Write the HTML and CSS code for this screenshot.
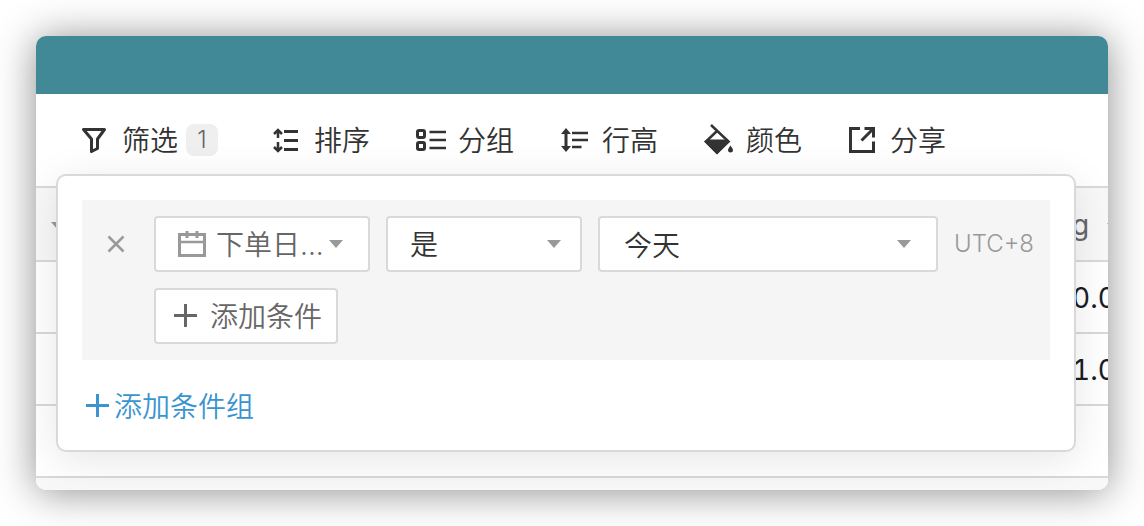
FILE: index.html
```html
<!DOCTYPE html>
<html lang="zh-CN">
<head>
  <meta charset="UTF-8" />
  <meta name="viewport" content="width=device-width, initial-scale=1.0" />
  <title>订单</title>
  <link rel="stylesheet" href="styles.css">
</head>
<body>
  <div class="window">
    <header class="title-bar"></header>

    <nav class="toolbar">
      <button class="tool" type="button">
        <svg class="icon" viewBox="0 0 32 32" fill="none" stroke="currentColor" stroke-width="3" stroke-linejoin="round">
          <path d="M3.500 5.500H24.500L17.500 15V24.500L11.500 27.500V15Z"/>
        </svg>
        <span class="label">筛选</span>
        <span class="badge">1</span>
      </button>
      <button class="tool" type="button">
        <svg class="icon" viewBox="0 0 32 32" fill="none" stroke="currentColor">
          <path stroke-width="2.500" d="M6 14V6M2 10L6 6L10 10M6 18V26M2 23L6 27L10 23"/>
          <path stroke-width="3" d="M12 7.500H26M12 16.500H26M12 25.500H26"/>
        </svg>
        <span class="label">排序</span>
      </button>
      <button class="tool" type="button">
        <svg class="icon" viewBox="0 0 32 32" fill="none" stroke="currentColor">
          <rect stroke-width="3" x="1.500" y="6.500" width="7" height="7" rx="1.500"/>
          <rect stroke-width="3" x="1.500" y="18.500" width="7" height="7" rx="1.500"/>
          <path stroke-width="2.500" d="M13.500 8H30M13.500 16H30M13.500 24H30"/>
        </svg>
        <span class="label">分组</span>
      </button>
      <button class="tool" type="button">
        <svg class="icon" viewBox="0 0 32 32" fill="currentColor">
          <path d="M6 4L11 10H7.500V22H11L6 28L1 22H4.500V10H1Z"/>
          <path d="M12 7.800H28V10.300H12ZM12 14.800H28V17.300H12ZM12 21.800H21.500V24.300H12Z"/>
        </svg>
        <span class="label">行高</span>
      </button>
      <button class="tool" type="button">
        <svg class="icon" viewBox="0 0 32 32">
          <path fill="none" stroke="currentColor" stroke-width="2.500" d="M7 1L24.500 17.500L13 28.500L2 17.500L13 7"/>
          <path fill="currentColor" d="M3 15.500H23.500L26 17.500L13 30.500L0 17.500Z"/>
          <path fill="currentColor" d="M26.500 21.500C28 24 29 25 29 26.200A2.500 2.200 0 0 1 24 26.200C24 25 25 24 26.500 21.500Z"/>
        </svg>
        <span class="label">颜色</span>
      </button>
      <button class="tool" type="button">
        <svg class="icon" viewBox="0 0 32 32" fill="none" stroke="currentColor" stroke-width="3">
          <path d="M12 4.500H2.500V27.500H25.500V17.500"/>
          <path d="M13.500 16.500L25 5M16.500 4.500H25.500V13.500"/>
        </svg>
        <span class="label">分享</span>
      </button>
    </nav>

    <table class="grid">
      <thead>
        <tr>
          <th class="first"><span class="caret"></span></th>
          <th></th>
          <th class="last">g<span class="caret"></span></th>
        </tr>
      </thead>
      <tbody>
        <tr><td></td><td></td><td class="last">0.0</td></tr>
        <tr><td></td><td></td><td class="last">1.0</td></tr>
        <tr><td></td><td></td><td></td></tr>
      </tbody>
    </table>
    <footer class="grid-footer"></footer>

    <section class="popover">
      <div class="group">
        <div class="condition">
          <button class="remove" type="button" aria-label="删除条件">
            <svg viewBox="0 0 32 32" fill="none" stroke="currentColor" stroke-width="2.500">
              <path d="M8.500 8.500L23.500 23.500M23.500 8.500L8.500 23.500"/>
            </svg>
          </button>
          <div class="select field">
            <svg class="calendar" viewBox="0 0 28 28" fill="none" stroke="currentColor">
              <path stroke-width="3" d="M1.500 4.500H26.500V25.500H1.500Z"/>
              <path stroke-width="2.500" d="M2 12H26"/>
              <path stroke-width="3" d="M9 1V8M19 1V8"/>
            </svg>
            <select aria-label="字段">
              <option>下单日...</option>
            </select>
          </div>
          <div class="select operator">
            <select aria-label="条件">
              <option>是</option>
            </select>
          </div>
          <div class="select value">
            <select aria-label="值">
              <option>今天</option>
            </select>
          </div>
          <span class="timezone">UTC+8</span>
        </div>
        <button class="add-condition" type="button">
          <svg class="plus" viewBox="0 0 28 28" stroke="currentColor" stroke-width="3">
            <path d="M2 13.500H25M13.500 2V25"/>
          </svg>
          <span class="label">添加条件</span>
        </button>
      </div>
      <button class="add-group" type="button">
        <svg class="plus" viewBox="0 0 28 28" stroke="currentColor" stroke-width="3">
          <path d="M2 13.500H25M13.500 2V25"/>
        </svg>
        <span class="label">添加条件组</span>
      </button>
    </section>
  </div>
</body>
</html>
```

FILE: styles.css
```css
* {
  box-sizing: border-box;
}
body {
  margin: 0;
  padding: 36px;
  background: #fff;
  color: #333;
  font-family: Inter, 'Noto Sans CJK SC', sans-serif;
  font-size: 28px;
  font-weight: 400;
  line-height: 40px;
}
button, select {
  font: inherit;
  color: inherit;
  background: none;
  border: none;
  padding: 0;
  margin: 0;
  cursor: pointer;
}
button, select, .timezone {
  font-weight: 350;
}
.window {
  position: relative;
  background: #fff;
  border-radius: 10px;
  box-shadow: 0 2px 40px rgba(0, 0, 0, 0.45);
}

/* top */
.title-bar {
  height: 58px;
  background: #418996;
  border-radius: 10px 10px 0 0;
}
.toolbar {
  display: flex;
  align-items: center;
  gap: 46px;
  height: 92px;
  padding: 0 44px;
}
.tool {
  display: flex;
  align-items: center;
  gap: 10px;
  white-space: nowrap;
}
.label {
  padding-top: 2px;
}
.icon {
  width: 32px;
  height: 32px;
}
.badge {
  width: 32px;
  height: 32px;
  margin: 0 8px 0 -2px;
  border-radius: 8px;
  background: #efefef;
  color: #666;
  font-size: 24px;
  line-height: 32px;
}

/* table */
.grid {
  width: 100%;
  table-layout: fixed;
  border-collapse: separate;
  border-spacing: 0;
  border-top: 2px solid #d9d9d9;
}
.grid th, .grid td {
  height: 74px;
  padding: 2px 0 0;
  border-bottom: 2px solid #d9d9d9;
  text-align: left;
  white-space: nowrap;
  overflow: hidden;
}
.grid td {
  height: 72px;
  color: #1b2026;
  font-variant-numeric: tabular-nums;
}
.grid th {
  background: #f8f8f8;
  color: #666;
  font-weight: 400;
}
.grid .first {
  width: 20px;
  padding: 0 0 0 15px;
}
.grid .last {
  width: 36px;
}
.caret {
  display: inline-block;
  border: 7px solid transparent;
  border-top: 8px solid #999;
  border-bottom: none;
  vertical-align: middle;
}
.last .caret {
  margin-left: 18px;
}
.grid-footer {
  height: 12px;
  background: #f8f8f8;
  border-radius: 0 0 10px 10px;
}

/* filter panel */
.popover {
  position: absolute;
  top: 138px;
  left: 20px;
  right: 32px;
  padding: 24px;
  background: #fff;
  border: 2px solid #d9d9d9;
  border-radius: 10px;
  box-shadow: 0 8px 40px rgba(0, 0, 0, 0.1);
  clip-path: inset(-60px -32px -38px -20px);
}
.group {
  padding: 16px 16px 16px 18px;
  background: #f5f5f5;
}
.condition {
  display: flex;
  align-items: center;
  gap: 16px;
}
.remove {
  width: 32px;
  height: 32px;
  margin-right: 6px;
  color: #999;
}
.remove svg {
  display: block;
}
.select {
  position: relative;
  height: 56px;
  background: #fff;
  border: 2px solid #d9d9d9;
  border-radius: 4px;
}
.select::after {
  content: '';
  position: absolute;
  top: 22px;
  right: 19px;
  border: 7px solid transparent;
  border-top: 8px solid #999;
  border-bottom: none;
  pointer-events: none;
}
.select select {
  appearance: none;
  width: 100%;
  height: 52px;
  padding: 2px 0 0 22px;
}
.field {
  width: 216px;
  color: #666;
}
.field select {
  padding-left: 60px;
}
.field::after {
  right: 25px;
}
.calendar {
  position: absolute;
  top: 12px;
  left: 22px;
  width: 28px;
  height: 28px;
  color: #999;
}
.operator {
  width: 196px;
}
.value {
  flex: 1;
}
.value select {
  padding: 4px 0 0 24px;
}
.value::after {
  right: 25px;
}
.timezone {
  width: 80px;
  color: #999;
  font-size: 24px;
}
.add-condition {
  display: flex;
  align-items: center;
  gap: 10px;
  height: 56px;
  margin: 16px 0 0 54px;
  padding: 0 14px 0 16px;
  background: #fff;
  border: 2px solid #d9d9d9;
  border-radius: 4px;
  color: #666;
}
.plus {
  width: 28px;
  height: 28px;
}
.add-group {
  display: flex;
  align-items: center;
  gap: 2px;
  height: 40px;
  margin: 26px 0 0 2px;
  color: #3a94d0;
}
```
